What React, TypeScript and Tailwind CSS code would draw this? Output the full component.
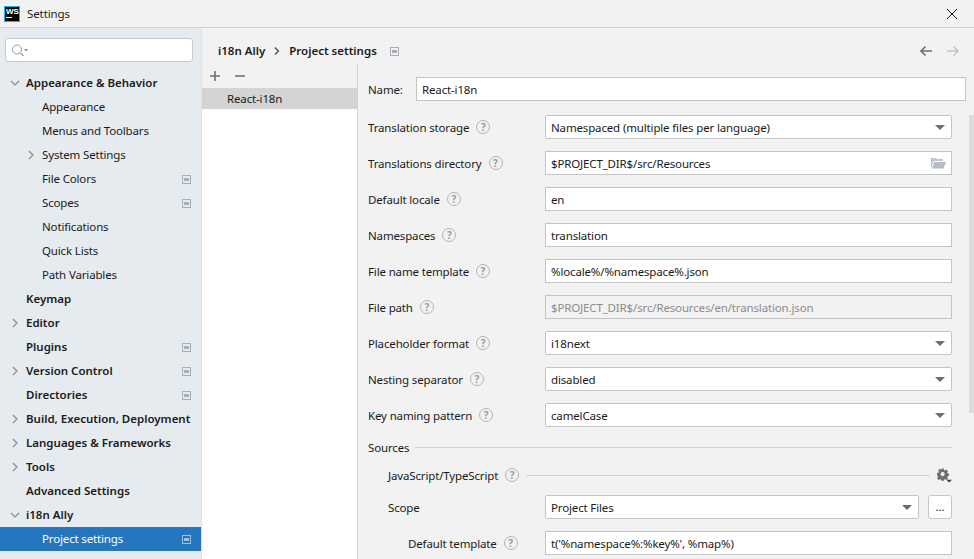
import React from "react";

const Help = () => (
  <span className="ml-[7px] inline-flex h-[14px] w-[14px] shrink-0 items-center justify-center rounded-full border border-[#b4b4b4] text-[10px] font-bold leading-none tracking-normal text-[#9a9a9a]">?</span>
);

const Pin = ({ light }: { light?: boolean }) => (
  <svg width="9" height="9" viewBox="0 0 9 9" className="shrink-0">
    <rect x="0.5" y="0.5" width="8" height="8" fill="none" stroke={light ? "#9fc1e2" : "#a7aeb5"} />
    <rect x="2" y="3" width="5" height="3" fill={light ? "#9fc1e2" : "#a7aeb5"} />
  </svg>
);

const Chevron = ({ open }: { open?: boolean }) => (
  <svg width="10" height="10" viewBox="0 0 10 10" className="shrink-0">
    {open ? (
      <path d="M1 3l4 4 4-4" fill="none" stroke="#8c8c8c" strokeWidth="1.2" />
    ) : (
      <path d="M3 1l4 4-4 4" fill="none" stroke="#8c8c8c" strokeWidth="1.2" />
    )}
  </svg>
);

type Item = { label: string; level: 0 | 1; bold?: boolean; arrow?: "open" | "closed"; pin?: boolean; selected?: boolean };

const items: Item[] = [
  { label: "Appearance & Behavior", level: 0, bold: true, arrow: "open" },
  { label: "Appearance", level: 1 },
  { label: "Menus and Toolbars", level: 1 },
  { label: "System Settings", level: 1, arrow: "closed" },
  { label: "File Colors", level: 1, pin: true },
  { label: "Scopes", level: 1, pin: true },
  { label: "Notifications", level: 1 },
  { label: "Quick Lists", level: 1 },
  { label: "Path Variables", level: 1 },
  { label: "Keymap", level: 0, bold: true },
  { label: "Editor", level: 0, bold: true, arrow: "closed" },
  { label: "Plugins", level: 0, bold: true, pin: true },
  { label: "Version Control", level: 0, bold: true, arrow: "closed", pin: true },
  { label: "Directories", level: 0, bold: true, pin: true },
  { label: "Build, Execution, Deployment", level: 0, bold: true, arrow: "closed" },
  { label: "Languages & Frameworks", level: 0, bold: true, arrow: "closed" },
  { label: "Tools", level: 0, bold: true, arrow: "closed" },
  { label: "Advanced Settings", level: 0, bold: true },
  { label: "i18n Ally", level: 0, bold: true, arrow: "open" },
  { label: "Project settings", level: 1, pin: true, selected: true },
];

const TreeRow = ({ item }: { item: Item }) => (
  <div className={`flex h-[24px] items-center pr-[10px] ${item.selected ? "bg-[#2675bf] text-white" : "text-[#1a1a1a]"} ${item.bold ? "font-semibold" : "tracking-[-0.15px]"}`}>
    <div className={`flex justify-end ${item.level === 0 ? "w-[26px] pr-[6px]" : "w-[42px] pr-[6px]"}`}>
      {item.arrow && <Chevron open={item.arrow === "open"} />}
    </div>
    <span className="flex-1 whitespace-nowrap">{item.label}</span>
    {item.pin && <Pin light={item.selected} />}
  </div>
);

const Caret = () => (
  <svg width="10" height="5" viewBox="0 0 10 5" className="shrink-0"><path d="M0 0h10L5 5z" fill="#6e6e6e" /></svg>
);

const Input = ({ value, disabled, children }: { value: string; disabled?: boolean; children?: React.ReactNode }) => (
  <div className={`flex h-[24px] w-full items-center justify-between border border-[#c4c4c4] pl-[5px] pr-[5px] ${disabled ? "bg-[#f2f2f2] text-[#8c8c8c]" : "bg-white text-[#1a1a1a]"}`}>
    <span className="pt-[1px]">{value}</span>
    {children}
  </div>
);

const Select = ({ value }: { value: string }) => (
  <div className="flex h-[24px] w-full items-center justify-between rounded-[2px] border border-[#c4c4c4] bg-white pl-[5px] pr-[6px] text-[#1a1a1a]">
    <span className="pt-[1px]">{value}</span>
    <Caret />
  </div>
);

const Row = ({ label, children }: { label: string; children: React.ReactNode }) => (
  <div className="flex h-[36px] items-center">
    <div className="flex w-[177px] items-center text-[#1a1a1a]">
      <span className="pt-[1px]">{label}</span>
      <Help />
    </div>
    <div className="w-[407px]">{children}</div>
  </div>
);

const Folder = () => (
  <svg width="15" height="12" viewBox="0 0 15 12"><path d="M0 1h5l1 1h6v2H3L0 11z" fill="#c0c6cc" /><path d="M3.5 5H15l-2.5 6.5H.8z" fill="#b4bbc2" /></svg>
);

const Gear = () => (
  <svg width="16" height="15" viewBox="0 0 16 15">
    <path d="M5.5 0h3l.4 1.8 1.4.6 1.6-1 2 2-1 1.6.6 1.4 1.8.4v2.4l-1.8.4-.6 1.4 1 1.6-2 2-1.6-1-1.4.6-.4 1.3h-3l-.4-1.3-1.4-.6-1.6 1-2-2 1-1.6-.6-1.4L0 8.2V5.8l1.8-.4.6-1.4-1-1.6 2-2 1.6 1 1.4-.6z" fill="#6e6e6e" transform="scale(0.85)" />
    <circle cx="6" cy="6" r="2.2" fill="#f2f2f2" />
    <path d="M10 12h6l-3 3z" fill="#3c3c3c" />
  </svg>
);

export default function App() {
  return (
    <div className="flex h-[559px] w-[974px] flex-col overflow-hidden bg-[#f2f2f2] font-['Noto_Sans','Open_Sans',sans-serif] text-[11.5px]">
      <div className="flex h-[28px] shrink-0 items-center border-b border-[#cfcfcf] pl-[4px] pr-[16px]">
        <div className="flex h-[16px] w-[16px] flex-col border border-[#16b4e8] bg-black px-[1px] pt-[1px]">
          <span className="font-['Liberation_Sans',sans-serif] text-[8px] font-bold leading-[8px] text-white">WS</span>
          <span className="mt-[1px] h-[1px] w-[6px] bg-white" />
        </div>
        <span className="ml-[7px] flex-1 tracking-[-0.1px] text-[#1a1a1a]">Settings</span>
        <svg width="12" height="12" viewBox="0 0 12 12"><path d="M1 1l10 10M11 1L1 11" stroke="#1a1a1a" strokeWidth="1" fill="none" /></svg>
      </div>

      <div className="relative flex min-h-0 flex-1">
        <aside className="w-[201px] shrink-0 bg-[#e6ebf0]">
          <div className="px-[5px] pt-[10px]">
            <div className="flex h-[24px] w-[188px] items-center gap-[1px] rounded-[3px] border border-[#c9c9c9] bg-white pl-[5px]">
              <svg width="18" height="13" viewBox="0 0 18 13">
                <circle cx="6" cy="5.5" r="4.5" fill="none" stroke="#9a9a9a" />
                <path d="M9.5 9l3 3" stroke="#9a9a9a" strokeWidth="1.3" />
                <path d="M13 5h4l-2 2.5z" fill="#8c8c8c" />
              </svg>
            </div>
          </div>
          <div className="mt-[9px]">
            {items.map((it) => (
              <TreeRow key={it.label} item={it} />
            ))}
          </div>
        </aside>

        <main className="flex min-w-0 flex-1 flex-col border-l border-[#e0e0e0]">
          <div className="flex h-[36px] shrink-0 items-center pl-[16px] pr-[14px] pt-[10px]">
            <span className="font-semibold text-[#1a1a1a]">i18n Ally</span>
            <svg width="6" height="8" viewBox="0 0 6 8" className="mx-[9px]"><path d="M1 0.5L4.5 4 1 7.5" fill="none" stroke="#3c3c3c" strokeWidth="1.1" /></svg>
            <span className="font-semibold text-[#1a1a1a]">Project settings</span>
            <span className="ml-[13px] flex"><Pin /></span>
            <span className="flex-1" />
            <svg width="14" height="12" viewBox="0 0 14 12"><path d="M13 6H2M6.5 1.5L2 6l4.5 4.5" fill="none" stroke="#6e6e6e" strokeWidth="1.6" /></svg>
            <svg width="14" height="12" viewBox="0 0 14 12" className="ml-[13px]"><path d="M1 6h11M7.5 1.5L12 6l-4.5 4.5" fill="none" stroke="#c4c4c4" strokeWidth="1.6" /></svg>
          </div>

          <div className="flex min-h-0 flex-1">
            <div className="flex w-[156px] shrink-0 flex-col border-r border-[#d1d1d1]">
              <div className="flex h-[24px] shrink-0 items-center gap-[13px] pl-[7px] text-[#6e6e6e]">
                <svg width="12" height="12" viewBox="0 0 12 12"><path d="M6 1v10M1 6h10" stroke="#6e6e6e" strokeWidth="1.6" /></svg>
                <svg width="12" height="12" viewBox="0 0 12 12"><path d="M1 6h10" stroke="#6e6e6e" strokeWidth="1.6" /></svg>
              </div>
              <div className="flex-1 bg-white">
                <div className="flex h-[21px] items-center bg-[#d4d4d4] pl-[25px] tracking-[-0.15px] text-[#1a1a1a]">React-i18n</div>
              </div>
            </div>

            <div className="min-w-0 flex-1 pl-[10px] tracking-[-0.15px]">
              <div className="mt-[13px] flex h-[24px] items-center text-[#1a1a1a]">
                <span className="w-[48px] pt-[1px]">Name:</span>
                <div className="w-[550px]"><Input value="React-i18n" /></div>
              </div>
              <div className="mt-[8px]">
                <Row label="Translation storage"><Select value="Namespaced (multiple files per language)" /></Row>
                <Row label="Translations directory"><Input value="$PROJECT_DIR$/src/Resources"><Folder /></Input></Row>
                <Row label="Default locale"><Input value="en" /></Row>
                <Row label="Namespaces"><Input value="translation" /></Row>
                <Row label="File name template"><Input value="%locale%/%namespace%.json" /></Row>
                <Row label="File path"><Input value="$PROJECT_DIR$/src/Resources/en/translation.json" disabled /></Row>
                <Row label="Placeholder format"><Select value="i18next" /></Row>
                <Row label="Nesting separator"><Select value="disabled" /></Row>
                <Row label="Key naming pattern"><Select value="camelCase" /></Row>
              </div>
              <div className="flex h-[28px] w-[584px] items-center text-[#1a1a1a]">
                <span className="pt-[1px]">Sources</span>
                <span className="ml-[6px] h-[1px] flex-1 bg-[#d1d1d1]" />
              </div>
              <div className="flex h-[28px] w-[584px] items-center pl-[20px] text-[#1a1a1a]">
                <span className="pt-[1px]">JavaScript/TypeScript</span>
                <Help />
                <span className="ml-[7px] h-[1px] flex-1 bg-[#d1d1d1]" />
                <span className="ml-[7px] flex w-[15px]"><Gear /></span>
              </div>
              <div className="flex h-[36px] items-center pl-[20px] text-[#1a1a1a]">
                <span className="w-[157px] pt-[1px]">Scope</span>
                <div className="w-[374px]"><Select value="Project Files" /></div>
                <div className="ml-[9px] flex h-[24px] w-[24px] items-center justify-center rounded-[3px] border border-[#c4c4c4] bg-white text-[#1a1a1a]">...</div>
              </div>
              <div className="flex h-[36px] items-center pl-[40px] text-[#1a1a1a]">
                <div className="flex w-[137px] items-center">
                  <span className="pt-[1px]">Default template</span>
                  <Help />
                </div>
                <div className="w-[407px]"><Input value="t('%namespace%:%key%', %map%)" /></div>
              </div>
            </div>
          </div>
        </main>

        <div className="absolute right-0 top-[87px] h-[298px] w-[5px] bg-[#dcdcdc]" />
      </div>
    </div>
  );
}
